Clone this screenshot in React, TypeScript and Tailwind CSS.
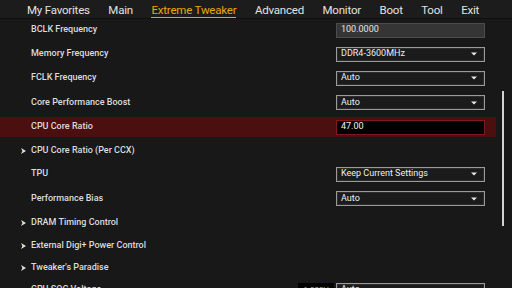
import React from "react";

type Row = {
  label: string;
  h: string;
  arrow?: boolean;
  kind?: "input" | "select" | "active";
  value?: string;
  extra?: string;
};

const rows: Row[] = [
  { label: "BCLK Frequency", h: "h-[24px]", kind: "input", value: "100.0000" },
  { label: "Memory Frequency", h: "h-[24px]", kind: "select", value: "DDR4-3600MHz" },
  { label: "FCLK Frequency", h: "h-[24px]", kind: "select", value: "Auto" },
  { label: "Core Performance Boost", h: "h-[25px]", kind: "select", value: "Auto" },
  { label: "CPU Core Ratio", h: "h-[24px]", kind: "active", value: "47.00" },
  { label: "CPU Core Ratio (Per CCX)", h: "h-[23px]", arrow: true },
  { label: "TPU", h: "h-[24px]", kind: "select", value: "Keep Current Settings" },
  { label: "Performance Bias", h: "h-[25px]", kind: "select", value: "Auto" },
  { label: "DRAM Timing Control", h: "h-[23px]", arrow: true },
  { label: "External Digi+ Power Control", h: "h-[23px]", arrow: true },
  { label: "Tweaker's Paradise", h: "h-[22px]", arrow: true },
  { label: "CPU SOC Voltage", h: "h-[22px]", kind: "select", value: "Auto", extra: "1.000V" },
];

const tabs = ["My Favorites", "Main", "Extreme Tweaker", "Advanced", "Monitor", "Boot", "Tool", "Exit"];

function Caret() {
  return (
    <svg width="6" height="4" viewBox="0 0 6 4" className="shrink-0">
      <polygon points="0,0.5 6,0.5 3,3.5" fill="#e8e8e8" />
    </svg>
  );
}

function Arrow() {
  return (
    <svg width="5" height="6" viewBox="0 0 5 6">
      <polygon points="0,0 5,3 0,6 1.4,3" fill="#e0e0e0" />
    </svg>
  );
}

function Control({ row }: { row: Row }) {
  if (row.kind === "input") {
    return (
      <div className="w-[149px] h-[15px] bg-[#353535] border border-[#4c4c4c] flex items-center pl-[4px] text-[9px] text-[#e4e4e4]">
        {row.value}
      </div>
    );
  }
  if (row.kind === "active") {
    return (
      <div className="w-[149px] h-[15px] bg-black border border-[#7e1a1b] flex items-center pl-[4px] text-[9px] text-[#f0f0f0]">
        {row.value}
      </div>
    );
  }
  if (row.kind === "select") {
    return (
      <div className="w-[149px] h-[15px] bg-[#1b1b1b] border border-[#9a9a9a] shadow-[inset_0_0_0_1px_#2c2c2c] flex items-center justify-between pl-[4px] pr-[7px] text-[9px] text-[#eeeeee]">
        <span>{row.value}</span>
        <Caret />
      </div>
    );
  }
  return null;
}

export default function App() {
  return (
    <div
      className="w-[512px] h-[288px] overflow-hidden bg-[#181818] relative"
      style={{ fontFamily: "Roboto, 'Open Sans', sans-serif" }}
    >
      <div className="relative z-10 h-[19px] bg-[#1c1c1c] border-b border-[#0f0f0f] flex items-center pl-[27px] gap-[18.5px] text-[11.5px] text-[#e2e2e2] tracking-[-0.2px]">
        {tabs.map((t) =>
          t === "Extreme Tweaker" ? (
            <span key={t} className="text-[#e9a80a] border-b-[1.5px] border-[#e9a80a] leading-[14px] mt-[3px]">
              {t}
            </span>
          ) : (
            <span key={t} className="leading-[14px] mt-[1px]">
              {t}
            </span>
          )
        )}
      </div>
      <div className="flex -mt-[1px]">
        <div className="w-[496px] flex flex-col">
          {rows.map((r) => (
            <div key={r.label} className={`${r.h} flex items-center`}>
              <div
                className={`w-full flex items-center ${
                  r.kind === "active" ? "h-[20px] bg-[#4b0f10]" : "h-full"
                }`}
              >
                <div className="w-[31px] flex justify-end pr-[5px] shrink-0">{r.arrow ? <Arrow /> : null}</div>
                <div className="flex-1 text-[9px] font-medium text-[#dcdcdc] whitespace-nowrap">{r.label}</div>
                {r.extra ? (
                  <div className="w-[36px] h-[15px] bg-black mr-[2px] text-[8px] text-[#aaa] flex items-center justify-center">
                    {r.extra}
                  </div>
                ) : null}
                <div className="mr-[11px]">
                  <Control row={r} />
                </div>
              </div>
            </div>
          ))}
        </div>
        <div className="flex-1 relative">
          <div className="absolute left-[6px] top-[73px] w-[2px] h-[135px] bg-[#d4d4d4]" />
        </div>
      </div>
    </div>
  );
}
